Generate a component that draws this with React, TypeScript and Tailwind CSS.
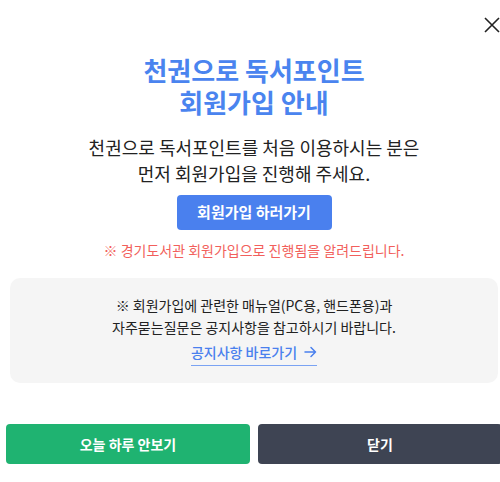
import React from 'react';

const font = { fontFamily: '"Noto Sans CJK KR", "Noto Sans", sans-serif' };

const CloseIcon: React.FC = () => (
  <svg width="16" height="16" viewBox="0 0 16 16" fill="none" stroke="#222" strokeWidth="1.6">
    <path d="M1 1L15 15M15 1L1 15" />
  </svg>
);

const ArrowIcon: React.FC = () => (
  <svg width="13" height="12" viewBox="0 0 13 12" fill="none" stroke="#4a80ee" strokeWidth="1.5" strokeLinecap="round" strokeLinejoin="round">
    <path d="M1 6H11.5M7 1.5L11.5 6L7 10.5" />
  </svg>
);

const App: React.FC = () => {
  return (
    <div className="relative w-[500px] h-[482px] overflow-hidden bg-white" style={font}>
      <button className="absolute left-[484px] top-[17px] w-4 h-4">
        <CloseIcon />
      </button>
      <div className="w-[508px] flex flex-col items-center pt-[54px]">
        <h2 className="flex flex-col text-[26px] leading-[32px] font-bold text-[#4a84ef] text-center">
          <span>천권으로 독서포인트</span>
          <span>회원가입 안내</span>
        </h2>
        <p className="mt-[16px] text-[18px] leading-[26px] text-[#222] text-center">
          천권으로 독서포인트를 처음 이용하시는 분은
          <br />
          먼저 회원가입을 진행해 주세요.
        </p>
        <button className="mt-[9px] w-[155px] h-[35px] rounded-[4px] bg-[#4a80ee] text-white text-[15px] font-semibold">
          회원가입 하러가기
        </button>
        <p className="mt-[10px] text-[14px] leading-[20px] text-[#f25f5c]">
          ※ 경기도서관 회원가입으로 진행됨을 알려드립니다.
        </p>
        <div className="mt-[18px] w-[488px] rounded-[10px] bg-[#f5f5f5] pt-4 pb-[17px] flex flex-col items-center">
          <p className="text-[14px] leading-[22px] text-[#222] text-center">
            ※ 회원가입에 관련한 매뉴얼(PC용, 핸드폰용)과
            <br />
            자주묻는질문은 공지사항을 참고하시기 바랍니다.
          </p>
          <a className="mt-1 flex items-center gap-[7px] pb-[3px] border-b border-[#7aa3f3] text-[14px] leading-[20px] font-medium text-[#4a80ee]">
            공지사항 바로가기
            <ArrowIcon />
          </a>
        </div>
        <div className="mt-[41px] w-full px-[6px] grid grid-cols-2 gap-2">
          <button className="h-10 rounded-[4px] bg-[#1fb371] text-white text-[14px] font-semibold">
            오늘 하루 안보기
          </button>
          <button className="h-10 rounded-[4px] bg-[#3e4453] text-white text-[14px] font-semibold">
            닫기
          </button>
        </div>
      </div>
    </div>
  );
};

export default App;
